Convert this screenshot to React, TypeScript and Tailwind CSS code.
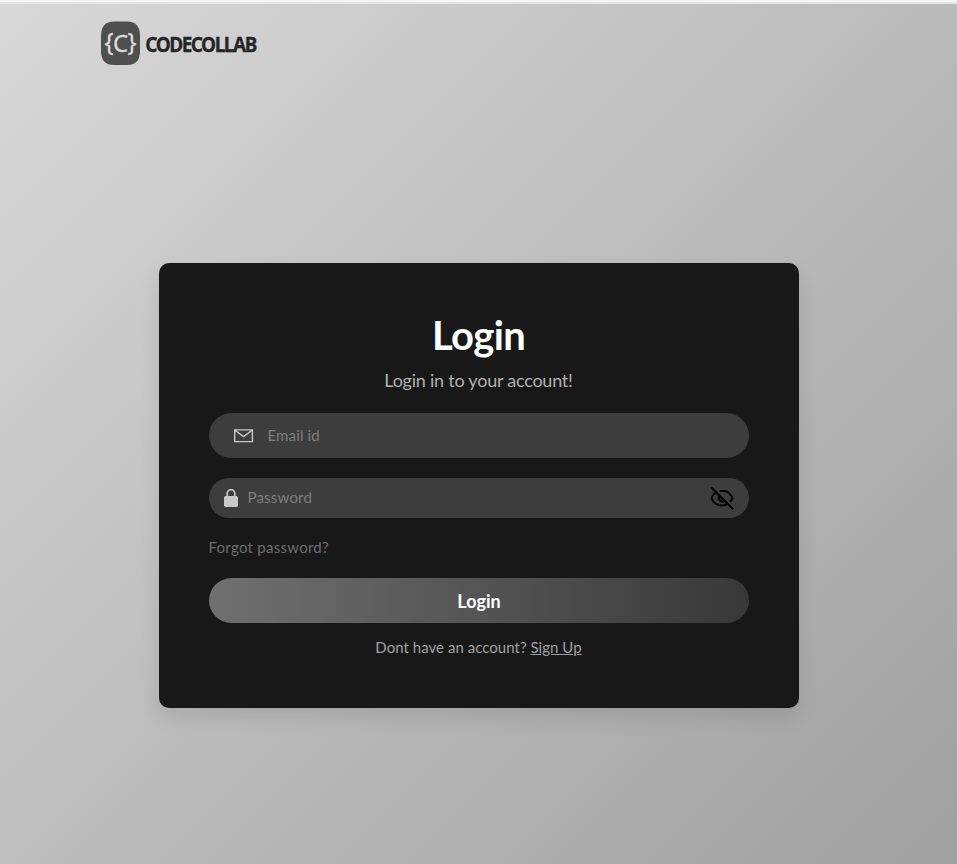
import React from "react";

function Logo() {
  return (
    <svg width="170" height="46" viewBox="100 20 170 46" role="img" aria-label="CodeCollab">
      <path d="M101 36Q101 21.5 114 21.5H127Q140 21.5 140 36V51Q140 65 127 65H114Q101 65 101 51Z" fill="#4f4f4f" />
      <g fill="#dcdcdc" stroke="#dcdcdc" strokeWidth="0.3" fontFamily="'Noto Sans', sans-serif">
        <text x="104.5" y="50.5" fontSize="25" textLength="9" lengthAdjust="spacingAndGlyphs">{"{"}</text>
        <text x="113" y="51.5" fontSize="24" textLength="15" lengthAdjust="spacingAndGlyphs">C</text>
        <text x="127.5" y="50.5" fontSize="25" textLength="9" lengthAdjust="spacingAndGlyphs">{"}"}</text>
      </g>
      <text x="145.3" y="51.5" fontSize="21.5" fontWeight="700" textLength="110.5" lengthAdjust="spacingAndGlyphs" letterSpacing="-1.7" fill="#262626" stroke="#262626" strokeWidth="0.3" fontFamily="'Noto Sans', sans-serif">CODECOLLAB</text>
    </svg>
  );
}

function MailIcon() {
  return (
    <svg width="20" height="14" viewBox="0 0 20 14" fill="none" stroke="#c8c8c8" strokeWidth="1.4">
      <path d="M.7.9H18.4V12.6H.7ZM1 1.2L9.6 7.6L18.1 1.2" />
    </svg>
  );
}

function LockIcon() {
  return (
    <svg width="14" height="18" viewBox="0 0 14 18">
      <rect y="7" width="14" height="11" rx="1.8" fill="#c8c8c8" />
      <path d="M3.2 8V4.5a3.8 3.8 0 0 1 7.6 0V8" fill="none" stroke="#c8c8c8" strokeWidth="1.7" />
    </svg>
  );
}

function EyeOffIcon() {
  return (
    <svg width="24" height="24" viewBox="0 0 24 24" fill="none" stroke="#000" strokeWidth="2" strokeLinecap="round" strokeLinejoin="round">
      <path d="M1.6 1.8L22.6 22.8" />
      <path d="M5.8 6.4C3.8 7.8 2.2 9.9 1.5 12.1C3.4 16.8 7.4 19.4 12 19.4C14 19.4 15.8 18.9 17.4 17.9M10.6 4.9C15.9 4.2 20.4 7.2 22.5 12.1C22 13.3 21.3 14.4 20.5 15.2" />
      <path d="M9.3 9.8C7 12.7 10.8 17.2 14.4 14.8" />
      <path d="M9.3 9.8L14.4 14.8C12.5 16.2 9 15.4 8.6 12.2Z" fill="#000" fillOpacity="0.4" stroke="none" />
    </svg>
  );
}

export default function App() {
  return (
    <main className="flex h-[864px] flex-col border-t-2 border-[#f5f5f5] bg-[#e4e4e4] pt-[2px] font-['Lato',sans-serif]">
      <div className="flex flex-1 flex-col bg-[linear-gradient(135deg,#d8d8d8,#a0a0a0)]">
        <header className="h-[259px] pl-[100px] pt-4"><Logo /></header>
        <section className="mx-auto flex h-[445px] w-[640px] flex-col rounded-[10px] bg-[#181818] px-[50px] pt-[50px] text-center shadow-[0_10px_20px_rgba(0,0,0,0.1)]">
          <h1 className="h-[50px] text-[40px] font-bold leading-[44px] tracking-[-0.65px] text-white">Login</h1>
          <p className="mt-[5px] h-[26px] text-[18px] leading-[25px] tracking-[-0.23px] text-[#b1b1b1]">Login in to your account!</p>
          <label className="mt-[19px] flex h-[45px] items-center rounded-full bg-[#3d3d3d] pl-[25px]">
            <MailIcon />
            <input type="email" placeholder="Email id" className="ml-[14px] w-[400px] bg-transparent text-[15px] tracking-[0.15px] text-white outline-none placeholder:text-[#7d7d7d]" />
          </label>
          <label className="mt-5 flex h-10 items-center rounded-full bg-[#3d3d3d] pl-[15px] pr-[15px]">
            <LockIcon />
            <input type="password" placeholder="Password" className="ml-[10px] flex-1 bg-transparent pb-px text-[15px] tracking-[0.2px] text-white outline-none placeholder:text-[#7d7d7d]" />
            <button type="button" aria-label="Show password"><EyeOffIcon /></button>
          </label>
          <a className="mt-5 h-5 self-start text-[15px] leading-[18px] tracking-[0.27px] text-[#6d6d6d]">Forgot password?</a>
          <button type="button" className="mt-5 h-[45px] shrink-0 rounded-full bg-[linear-gradient(90deg,#707070,#383838)] pl-px pt-px text-[18px] font-bold text-white">Login</button>
          <p className="mt-[15px] text-[15px] leading-[18px] tracking-[0.03px] text-[#a0a0a0]">Dont have an account? <a className="underline">Sign Up</a></p>
        </section>
      </div>
    </main>
  );
}
